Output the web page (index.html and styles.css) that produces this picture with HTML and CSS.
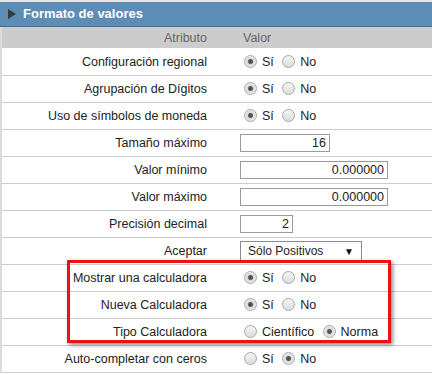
FILE: index.html
```html
<!DOCTYPE html>
<html lang="es">
<head>
    <meta charset="UTF-8">
    <title>Formato de valores</title>
    <link rel="stylesheet" href="styles.css">
</head>
<body>

<div class="panel">
    <div class="panel-title"><span class="arrow"></span>Formato de valores</div>

    <table class="props">
        <tr>
            <th class="label">Atributo</th>
            <th class="value">Valor</th>
        </tr>
        <tr>
            <td class="label">Configuración regional</td>
            <td class="value">
                <input type="radio" name="regional" checked><span class="opt">Sí</span>
                <input type="radio" name="regional"><span class="opt">No</span>
            </td>
        </tr>
        <tr>
            <td class="label">Agrupación de Dígitos</td>
            <td class="value">
                <input type="radio" name="grupo" checked><span class="opt">Sí</span>
                <input type="radio" name="grupo"><span class="opt">No</span>
            </td>
        </tr>
        <tr>
            <td class="label">Uso de símbolos de moneda</td>
            <td class="value">
                <input type="radio" name="moneda" checked><span class="opt">Sí</span>
                <input type="radio" name="moneda"><span class="opt">No</span>
            </td>
        </tr>
        <tr>
            <td class="label">Tamaño máximo</td>
            <td class="value"><input type="text" class="num w-md" value="16"></td>
        </tr>
        <tr>
            <td class="label">Valor mínimo</td>
            <td class="value"><input type="text" class="num w-lg" value="0.000000"></td>
        </tr>
        <tr>
            <td class="label">Valor máximo</td>
            <td class="value"><input type="text" class="num w-lg" value="0.000000"></td>
        </tr>
        <tr>
            <td class="label">Precisión decimal</td>
            <td class="value"><input type="text" class="num w-sm" value="2"></td>
        </tr>
        <tr>
            <td class="label">Aceptar</td>
            <td class="value">
                <div class="select">Sólo Positivos<span class="caret">&#9660;</span></div>
            </td>
        </tr>
        <tr>
            <td class="label">Mostrar una calculadora</td>
            <td class="value">
                <input type="radio" name="calc" checked><span class="opt">Sí</span>
                <input type="radio" name="calc"><span class="opt">No</span>
            </td>
        </tr>
        <tr>
            <td class="label">Nueva Calculadora</td>
            <td class="value">
                <input type="radio" name="nueva" checked><span class="opt">Sí</span>
                <input type="radio" name="nueva"><span class="opt">No</span>
            </td>
        </tr>
        <tr>
            <td class="label">Tipo Calculadora</td>
            <td class="value">
                <input type="radio" name="tipo"><span class="opt">Científico</span>
                <input type="radio" name="tipo" checked><span class="opt">Norma</span>
            </td>
        </tr>
        <tr>
            <td class="label">Auto-completar con ceros</td>
            <td class="value">
                <input type="radio" name="ceros"><span class="opt">Sí</span>
                <input type="radio" name="ceros" checked><span class="opt">No</span>
            </td>
        </tr>
    </table>

    <div class="highlight"></div>
</div>

</body>
</html>
```

FILE: styles.css
```css
body {
    margin: 0;
    padding: 0;
    font-family: "Liberation Sans", Arial, sans-serif;
    font-size: 12.5px;
    color: #222;
    background-color: #fff;
    overflow: hidden;
}

.panel {
    position: relative;
    border-top: 2px solid #e6e6e6;
}

.panel-title {
    height: 24px;
    line-height: 24px;
    background-color: #5b8db7;
    border-bottom: 1px solid #41698b;
    color: #fff;
    font-size: 13px;
    font-weight: bold;
    padding-left: 8px;
}

.arrow {
    display: inline-block;
    width: 0;
    height: 0;
    border-top: 5px solid transparent;
    border-bottom: 5px solid transparent;
    border-left: 8px solid #3a3a3a;
    margin-right: 7px;
    vertical-align: -1px;
}

.props {
    width: 100%;
    border-collapse: collapse;
    border-left: 2px solid #dcdcdc;
}

.props th {
    background-color: #cccccc;
    color: #666;
    font-weight: normal;
    height: 21px;
    padding: 0;
    border-bottom: 1px solid #fff;
}

.props td {
    height: 26px;
    padding: 0;
    border-bottom: 1px solid #cdcdcd;
}

.label {
    width: 205px;
    padding-right: 13px !important;
    text-align: right;
}

.value {
    text-align: left;
    padding-left: 20px !important;
}

.props th.value {
    padding-left: 23px !important;
}

input[type="radio"] {
    appearance: none;
    -webkit-appearance: none;
    width: 13px;
    height: 13px;
    margin: 0 5px 0 4px;
    border: 1px solid #a9a9a9;
    border-radius: 50%;
    background: linear-gradient(#f4f4f4, #dcdcdc);
    vertical-align: -2px;
    box-sizing: border-box;
}

input[type="radio"]:checked {
    background: radial-gradient(circle, #4a4a4a 0, #5a5a5a 2px, #d8d8d8 3px, #eeeeee 6px);
}

.opt {
    margin-right: 1px;
}

input[type="text"] {
    height: 18px;
    box-sizing: border-box;
    border: 1px solid #9a9a9a;
    font-family: "Liberation Sans", Arial, sans-serif;
    font-size: 12.5px;
    color: #222;
    padding: 0 3px;
    margin: 0;
    vertical-align: middle;
}

.num {
    text-align: right;
}

.w-sm {
    width: 53px;
}

.w-md {
    width: 90px;
}

.w-lg {
    width: 148px;
}

.select {
    display: inline-flex;
    justify-content: space-between;
    align-items: center;
    width: 122px;
    height: 20px;
    box-sizing: border-box;
    border: 1px solid #8c8c8c;
    padding: 0 7px 0 7px;
    font-size: 12px;
    vertical-align: middle;
}

.caret {
    font-size: 10px;
    color: #111;
}

.highlight {
    position: absolute;
    left: 67px;
    top: 258px;
    width: 318px;
    height: 77px;
    border: 3px solid #ee1111;
    box-shadow: 2px 2px 4px rgba(0, 0, 0, 0.45);
    pointer-events: none;
}
```
